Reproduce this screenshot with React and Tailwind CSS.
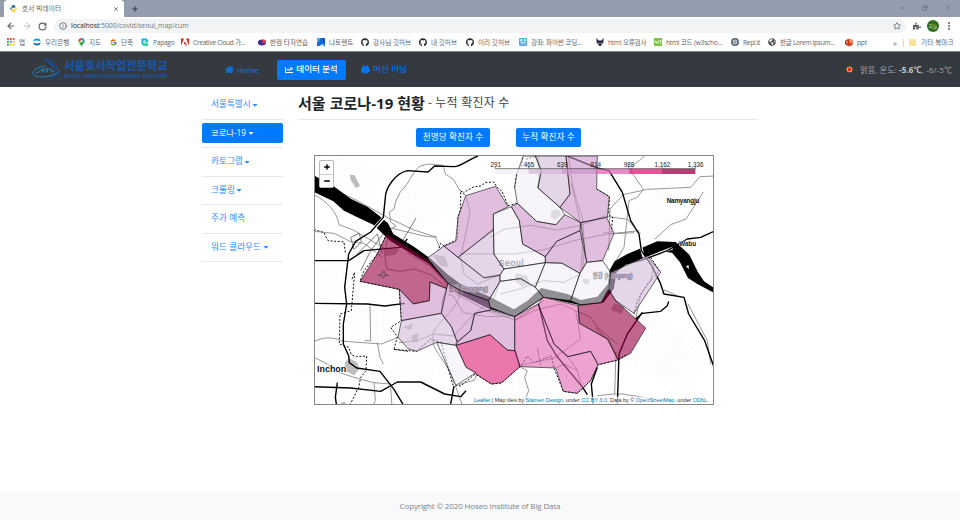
import React from "react";
import {
  FaHome, FaChartLine, FaBrain, FaGithub, FaPuzzlePiece, FaGlobeAmericas, FaCaretDown,
} from "react-icons/fa";
import { FcGoogle } from "react-icons/fc";
import { ArrowLeft, ArrowRight, RotateCw, Info, Star, X, Plus, Minus, MoreVertical, Copy } from "lucide-react";

const GridIcon = () => (
  <svg viewBox="0 0 9 9" className="size-[8px]">
    {["#ea4335", "#ea4335", "#ea4335", "#34a853", "#4285f4", "#fbbc04", "#34a853", "#fbbc04", "#fbbc04"].map((c, i) => (
      <rect key={i} x={(i % 3) * 3.2} y={Math.floor(i / 3) * 3.2} width="2.1" height="2.1" fill={c} />
    ))}
  </svg>
);
const WooriIcon = () => (
  <svg viewBox="0 0 16 16" className="size-[8px]">
    <path d="M1 7a7 6 0 0 1 14 0c-4-3-10-3-14 0z" fill="#1595d3" />
    <path d="M1 9c4 3 10 3 14 0a7 6 0 0 1-14 0z" fill="#0b67b2" />
  </svg>
);
const PinIcon = () => (
  <svg viewBox="0 0 16 20" className="h-[9px] w-[7px]">
    <path d="M8 20C7 14 1 12 1 7a7 7 0 0 1 14 0c0 5-6 7-7 13z" fill="#34a853" />
    <path d="M1 7a7 7 0 0 1 7-7v7z" fill="#ea4335" />
    <path d="M8 0a7 7 0 0 1 7 7H8z" fill="#4285f4" />
    <path d="M1 7l7 0-5 5z" fill="#fbbc04" />
    <circle cx="8" cy="7" r="2.5" fill="#fff" />
  </svg>
);
const PapagoIcon = () => (
  <svg viewBox="0 0 16 16" className="size-[8px]">
    <path d="M1 1h10l4 5-3 3 3 6H4l-3-4z" fill="#13b6d8" />
    <path d="M1 9h10l3 6H4z" fill="#12c98b" />
    <path d="M5 5h5v2H7v2h4v2H5z" fill="#fff" />
  </svg>
);
const AdobeIcon = () => (
  <svg viewBox="0 0 16 14" className="h-[8px] w-[9px]">
    <path d="M0 0h6L0 14zM10 0h6v14zM8 5l4 9H9.500l-1.200-3H5.600z" fill="#e1251b" />
  </svg>
);
const HancomIcon = () => (
  <svg viewBox="0 0 16 14" className="h-[7px] w-[8px]">
    <ellipse cx="8" cy="7" rx="8" ry="6" fill="#472a8c" />
    <circle cx="12" cy="5" r="4" fill="#e03a56" />
    <circle cx="4" cy="8" r="3.5" fill="#37308f" />
  </svg>
);
const TorrentIcon = () => (
  <svg viewBox="0 0 16 16" className="size-[8px]">
    <path d="M0 0h16v16H0z" fill="#1269d5" />
    <path d="M0 0h8L2 9H0z" fill="#2fb4ee" />
    <path d="M10 2h5v12z" fill="#0a4fc0" />
    <path d="M4 16l9-5v5z" fill="#bdeaff" />
  </svg>
);
const LectureIcon = () => (
  <svg viewBox="0 0 16 16" className="size-[8px]">
    <rect width="16" height="16" rx="2" fill="#40b8df" />
    <path d="M3 3h3v3H3zM10 3h3v3h-3zM3 9h10M4 12h3M10 12h3" stroke="#d9f5ff" strokeWidth="1.6" fill="none" />
  </svg>
);
const FoxIcon = () => (
  <svg viewBox="0 0 16 16" className="size-[8px]">
    <path d="M1 0l4 5h6l4-5v8l-5 8H6L1 8z" fill="#26263e" />
    <path d="M4 8l3 3-1 3zM12 8l-3 3 1 3z" fill="#d8d8e8" />
  </svg>
);
const W3Icon = () => (
  <svg viewBox="0 0 16 16" className="size-[8px]">
    <rect width="16" height="16" fill="#7ac143" />
    <path d="M2 5l2 6 2-5 2 5 2-6M11 5h3l-2 3c3 0 2 4-1 3" stroke="#e9ffd9" strokeWidth="1.4" fill="none" />
  </svg>
);
const ReplIcon = () => (
  <svg viewBox="0 0 16 16" className="size-[8px]">
    <circle cx="8" cy="8" r="8" fill="#56676e" />
    <circle cx="8" cy="8" r="4" fill="none" stroke="#fff" strokeWidth="1.6" />
    <circle cx="8" cy="8" r="1.4" fill="#fff" />
  </svg>
);
const PptIcon = () => (
  <svg viewBox="0 0 16 16" className="size-[9px]">
    <circle cx="8.5" cy="8" r="7.5" fill="#d35230" />
    <path d="M9 .5A7.5 7.5 0 0 1 16 8H9z" fill="#ff8f6b" />
    <rect y="4" width="8" height="8" rx="1" fill="#b7280f" />
    <path d="M3 10.500V6h1.500a1.300 1.300 0 0 1 0 2.600H3" stroke="#fff" fill="none" />
  </svg>
);
const PythonIcon = () => (
  <svg viewBox="0 0 16 16" className="size-[7px]">
    <path d="M8 0C4 0 4 1.500 4 3v1.500h4.500V5H2.500C0 5 0 11 2.500 11H4V9c0-1 1-2 2-2h4c1 0 2-1 2-2V3c0-2-1-3-4-3z" fill="#3776ab" />
    <path d="M8 16c4 0 4-1.500 4-3v-1.500H7.500V11h6C16 11 16 5 13.500 5H12v2c0 1-1 2-2 2H6c-1 0-2 1-2 2v2c0 2 1 3 4 3z" fill="#ffd43b" />
  </svg>
);

const gh = <FaGithub className="size-[8.500px] text-[#24292e]" />;
const bookmarks = [
  { w: "w-[26px]", icon: <GridIcon />, label: "앱" },
  { w: "w-[44px]", icon: <WooriIcon />, label: "우리은행" },
  { w: "w-[32px]", icon: <PinIcon />, label: "지도" },
  { w: "w-[32px]", icon: <FcGoogle className="size-[7px]" />, label: "단축" },
  { w: "w-[40px] tracking-[-0.25px]", icon: <PapagoIcon />, label: "Papago" },
  { w: "w-[77px] tracking-[-0.3px]", icon: <AdobeIcon />, label: "Creative Cloud 가..." },
  { w: "w-[59px]", icon: <HancomIcon />, label: "한컴 타자연습" },
  { w: "w-[44px]", icon: <TorrentIcon />, label: "냐토렌트" },
  { w: "w-[58px]", icon: gh, label: "강사님 깃허브" },
  { w: "w-[47px]", icon: gh, label: "내 깃허브" },
  { w: "w-[53px]", icon: gh, label: "이리 깃허브" },
  { w: "w-[77px] tracking-[-0.15px]", icon: <LectureIcon />, label: "강좌: 파이썬 코딩..." },
  { w: "w-[58px] tracking-[-0.2px]", icon: <FoxIcon />, label: "html 오류검사" },
  { w: "w-[77px] tracking-[-0.22px]", icon: <W3Icon />, label: "html 코드 (w3scho..." },
  { w: "w-[37px] tracking-[-0.3px]", icon: <ReplIcon />, label: "Repl.it" },
  { w: "w-[77px] tracking-[-0.32px]", icon: <FaGlobeAmericas className="size-[8px] text-[#4d5156]" />, label: "한글 Lorem Ipsum..." },
  { w: "w-[40px] tracking-[-0.2px]", icon: <PptIcon />, label: "ppt" },
];

function Browser() {
  return (
    <header className="text-[#5f6368]">
      <div className="flex h-[17px] items-stretch bg-[#949dae] pl-1">
        <div className="flex w-[120px] items-center rounded-t-[4px] bg-white pr-[5px] pl-[6px] text-[6.600px]">
          <PythonIcon />
          <span className="ml-[5px] flex-1 tracking-[0.15px] whitespace-nowrap">호서 빅데이터</span>
          <X className="size-[6px]" strokeWidth={3} />
        </div>
        <div className="flex flex-1 items-center pl-[7px]">
          <Plus className="size-[8px] text-[#353a42]" strokeWidth={3} />
        </div>
        <div className="flex h-[15px] items-center gap-[17px] pr-[8px] text-[#66707f]">
          <Minus className="size-[6px]" strokeWidth={3} />
          <Copy className="size-[6px] -scale-x-100" strokeWidth={3} />
          <X className="size-[7px]" strokeWidth={2.5} />
        </div>
      </div>
      <div className="flex h-[18px] items-center bg-white pr-[6px] pl-[6px]">
        <ArrowLeft className="size-[10px]" strokeWidth={2.600} />
        <ArrowRight className="ml-[6px] size-[10px] text-[#b9bcc0]" strokeWidth={2.400} />
        <RotateCw className="ml-[6px] size-[9px]" strokeWidth={3} />
        <div className="ml-[7px] flex h-[14px] w-[852px] items-center rounded-full bg-[#f1f3f4] px-[5px]">
          <Info className="size-[8px]" strokeWidth={2.400} />
          <span className="ml-1 flex-1 text-[7px] tracking-[-0.11px] text-[#777b80]"><span className="text-[#303134]">localhost</span>:5000/covid/seoul_map/cum</span>
          <Star className="size-[8px]" strokeWidth={2.500} />
        </div>
        <FaPuzzlePiece className="ml-[7px] size-[8px]" />
        <div className="ml-[6px] flex size-[12px] items-center justify-center rounded-full bg-[#2f6d1e] text-[4.500px] text-[#d9e8d5]">하늘</div>
        <MoreVertical className="ml-[5px] size-[10px]" strokeWidth={3} />
      </div>
      <div className="flex h-[16px] items-center bg-white pb-px pl-[7px] text-[6.600px]">
        {bookmarks.map((b, i) => (
          <div key={i} className={"flex shrink-0 items-center gap-[4px] whitespace-nowrap " + b.w}>
            <span className="flex w-[8px] shrink-0 justify-center">{b.icon}</span>
            {b.label}
          </div>
        ))}
        <span className="ml-[8px] w-[10px] text-[8px]">»</span>
        <span className="h-[8px] w-px bg-[#d5d8db]" />
        <span className="ml-[5px] h-[7px] w-[7px] rounded-[1px] bg-[#fce293]" />
        <span className="ml-[5px] tracking-[0.1px] whitespace-nowrap">기타 북마크</span>
      </div>
      <div className="h-px bg-[#85898d]" />
    </header>
  );
}

function Logo() {
  return (
    <div className="flex w-[136px] items-center">
      <svg viewBox="0 0 96 72" className="h-[24px] w-[32px] shrink-0" fill="none">
        <path d="M34 5C60-6 84 32 83 67c-5-24-22-47-49-62z" fill="#17509b" />
        <path d="M40 7C60 6 76 30 79 54" stroke="#343a40" strokeWidth="4" />
        <path d="M34 5C60-4 82 28 84 66" stroke="#17509b" strokeWidth="3" />
        <path d="M40 24C9 28-7 45 8 53c15 8 52 4 75-14" stroke="#2381b6" strokeWidth="3" />
        <path d="M12 46c9-2 15-12 22-14l-2 11 10-13 5 2-4 11 9-11 7 3-2 8 10-5" stroke="#2489b8" strokeWidth="3" />
        <path d="M39 57c17 1 31-5 40-15-5 13-20 25-39 27 12-4 20-7 24-13" fill="#17509b" />
      </svg>
      <div className="w-[104px] whitespace-nowrap text-[#1b55a0]">
        <div className="text-[11.500px] leading-[14px] font-black tracking-[-0.25px]">서울호서직업전문학교</div>
        <div className="font-['Liberation_Sans_Narrow','Liberation_Sans',sans-serif] text-[5.600px] leading-[7px] font-bold tracking-[-0.38px]">SEOUL HOSEO OCCUPATIONAL COLLEGE</div>
      </div>
    </div>
  );
}

function Navbar() {
  return (
    <nav className="flex h-[35px] items-center bg-[#343a40] pr-[8px] pl-[32px] text-[8.500px] whitespace-nowrap text-[#0878f2]">
      <Logo />
      <div className="ml-[57px] flex w-[52px] items-center gap-[3px] text-[8px] tracking-[-0.3px]"><FaHome className="size-[9px]" />Home</div>
      <div className="flex h-[20px] w-[69px] items-center justify-center gap-[3px] rounded-[2px] bg-[#007bff] font-medium text-white">
        <FaChartLine className="size-[8px]" />데이터 분석
      </div>
      <div className="ml-[15px] flex items-center gap-[3px] tracking-[0.1px]"><FaBrain className="size-[9px]" />머신 러닝</div>
      <div className="ml-auto flex items-center text-[8px] tracking-[0.12px] text-[#a1a5a9]">
        <svg viewBox="0 0 18 18" className="mr-[7px] size-[7px]">
          <path d="M9 0l2 3 4-1v4l3 3-3 3v4l-4-1-2 3-2-3-4 1v-4L0 9l3-3V2l4 1z" fill="#f5a529" />
          <circle cx="9" cy="9" r="4.500" fill="#f01b1b" />
        </svg>
        <span>맑음, 온도: <b className="text-[#c7cacd]">-5.6℃</b>, -6/-5℃</span>
      </div>
    </nav>
  );
}

const menu = [
  { label: "서울특별시", caret: true },
  { label: "코로나-19", caret: true, active: true },
  { label: "카토그램", caret: true },
  { label: "크롤링", caret: true },
  { label: "주가 예측" },
  { label: "워드 클라우드", caret: true },
];

function Sidebar() {
  return (
    <aside className="w-[81px] shrink-0 pt-[4px]">
      {menu.map((m) => (
        <div key={m.label} className="flex h-[28.500px] items-center border-b border-[#e9e9e9]">
          <div className={m.active
            ? "flex h-[20px] w-full items-center rounded-[2px] bg-[#007bff] pl-[9px] text-[8.300px] text-white"
            : "flex h-[20px] w-full items-center pl-[9px] text-[8.600px] tracking-[0.050px] text-[#2b8fff]"}>
            {m.label}
            {m.caret && <FaCaretDown className="ml-[0.500px] size-[8px]" />}
          </div>
        </div>
      ))}
    </aside>
  );
}

// Fill for each district, in the choropleth's class order.
const P = { a: "#f1eef6", b: "#d4b9da", c: "#c994c7", d: "#df65b0", e: "#dd1c77", f: "#980043" };
const districts = [
  ["f", "218,240 340,316 402,388 398,404 348,384 346,440 298,450 256,406 138,382 190,300"],
  ["b", "340,312 390,276 432,310 510,370 558,362 558,382 524,440 440,410 402,388"],
  ["b", "432,310 538,225 540,300 570,345 558,364 510,372"],
  ["c", "455,125 545,97 582,158 538,180 538,228 432,310 390,276 425,262 432,190"],
  ["a", "538,180 592,158 616,200 626,270 694,308 694,326 570,345 540,300"],
  ["a", "570,345 694,326 664,400 620,374 558,382 558,362"],
  ["c", "592,158 610,148 668,202 726,212 752,182 800,206 798,230 728,262 694,308 626,270 616,200"],
  ["a", "628,6 664,6 682,50 672,102 738,160 752,182 726,212 668,202 610,148 602,100 608,60"],
  ["b", "664,6 756,6 768,120 738,160 672,102 682,50"],
  ["c", "756,6 850,6 848,105 886,128 880,190 800,206 738,160 768,120"],
  ["c", "800,206 878,190 900,238 866,320 818,325"],
  ["c", "798,230 818,325 798,358 744,328 694,326 694,308 728,262"],
  ["a", "694,326 744,328 798,358 770,440 688,430 664,400"],
  ["a", "818,325 866,320 888,352 890,400 862,446 800,452 770,440 798,358"],
  ["a", "558,382 620,374 664,400 688,430 602,488 528,460 524,440"],
  ["b", "890,355 1000,305 1040,355 960,478 905,440 885,405"],
  ["f", "882,408 905,440 995,522 950,598 912,618 882,556 796,508 792,455 862,446"],
  ["d", "672,450 688,430 792,455 796,508 882,556 912,618 852,632 830,592 762,608 720,570"],
  ["d", "602,488 672,450 720,570 762,608 830,592 852,632 830,680 790,718 748,712 725,642 618,638 602,590"],
  ["e", "426,574 528,542 580,588 604,590 618,638 565,685 532,690 456,640"],
  ["c", "426,564 470,530 482,478 530,468 602,488 602,590 580,588 528,542 426,574"],
  ["c", "402,388 440,410 524,440 530,468 482,478 470,530 430,565 412,518 382,478 386,440"],
  ["c", "256,406 298,450 346,440 348,384 398,404 382,478 262,500"],
  ["b", "262,500 382,478 412,518 430,565 426,574 368,565 308,592 282,584 252,550"],
  ["a", "368,565 426,574 456,640 486,656 426,694"],
];

const streets = [
  [20, 20, 180, 90, 20], [240, 80, 170, 120, -15], [10, 470, 65, 130, 2], [110, 455, 120, 110, 0],
  [250, 590, 110, 110, 12], [920, 500, 180, 150, 20], [1010, 40, 150, 90, -10], [960, 170, 130, 60, 15],
  [610, 500, 110, 130, -16], [400, 420, 110, 100, 24], [640, 210, 130, 110, 12], [270, 400, 100, 90, 8],
  [770, 90, 80, 90, 3], [690, 340, 80, 60, 20], [20, 650, 180, 80, 6], [500, 660, 200, 70, 0], [1040, 560, 120, 140, 30], [0, 340, 80, 90, 0],
];

const highways = [
  "M492 6C460 18 440 38 420 38L362 36L342 54L280 50C245 58 215 100 214 130L208 190L170 234L125 262L104 300L98 350L92 400L98 450L88 510L88 570L104 605L106 626L128 642L198 652L240 706L270 756",
  "M0 320L104 320L150 290L258 280L280 255",
  "M0 448L160 450L212 456L272 448",
  "M0 698L110 702L200 712L250 684L320 684L392 720L440 728L456 710",
  "M70 686L64 730L68 756", "M420 696L410 750",
  "M760 6L850 42L885 50L925 115L950 200L975 240L982 290L1010 330L1038 385L1050 420L1110 430L1124 480L1172 560L1200 640",
  "M965 495L985 478L1040 472L1060 455L1064 442",
  "M980 320L1060 290L1120 255L1160 250L1200 232",
  "M985 475L940 540L915 600L910 756",
  "M674 450L700 560L728 606L806 700L820 722", "M850 640L832 690L838 756",
];

const localRoads = [
  "M45 100L130 140L220 190L300 228L370 250", "M40 124L190 216L260 266L338 324",
  "M0 122C40 142 70 175 75 212L118 228L210 282", "M0 232L60 238L108 262L150 268L205 310",
  "M318 36C290 60 282 95 260 112L246 140L240 165L226 174L230 204L246 216L228 226",
  "M318 36L345 30L388 34L394 60L418 76L438 110L452 116", "M230 222L330 246L364 250L378 282",
  "M455 125L468 175L455 240L440 310L450 360L490 390L558 362",
  "M440 300L538 300L600 300L694 286L780 260L880 240L960 236",
  "M528 250L570 226L650 214L728 228L800 214L870 186L940 196L980 240",
  "M672 6L676 60L670 104", "M764 6L775 90L788 140L805 190L812 280L806 345M772 90L796 190L806 280L800 350",
  "M1200 66L1158 68L1130 100L1000 106L928 122L888 165L884 290",
  "M950 50C960 20 980 24 990 6M950 50L988 106L970 130L945 140L930 280L900 330",
  "M1168 114L1116 195L1070 212L1022 256", "M868 236L900 238L975 230",
  "M400 420L418 426L448 476L520 488L602 486", "M440 410C430 470 390 485 360 530C340 590 400 610 420 690",
  "M255 566L310 560L360 540L420 546L470 490L540 432L560 380",
  "M0 562C40 545 60 552 90 562L202 570L252 550", "M168 454L170 560L152 560",
  "M0 610L40 630L60 650L120 670L178 686L230 690", "M190 566L198 610L208 630", "M230 700L234 756M180 686L184 740L176 756",
  "M602 500L660 470L740 450L785 470L800 555L720 612L610 636",
  "M670 582L680 635M720 570L770 620L790 650L806 706", "M785 470L830 490L850 520L910 570",
  "M845 520L878 556L912 615", "M1020 330L1010 380L980 420L965 495",
  "M620 640L640 650L632 670L644 710L626 756", "M726 642L750 630L790 650",
  "M906 594L902 720L925 720L1018 735M902 720L850 725",
  "M1044 420L1052 408L1100 430M1122 450L1180 560L1190 630",
  "M424 695L446 756M434 692L482 678L488 662", "M560 420L620 404L690 380L750 385L800 360",
  "M218 345L260 352L300 345L350 362L395 398M222 246L212 300L218 345",
];

const borders = [
  "M452 122L440 110L440 165L432 190L430 256L390 276L380 268L372 290",
  "M455 112L480 98L500 96L514 86L540 84L550 100L564 112L582 155L610 148",
  "M602 100L608 60L620 44L628 6M636 16L664 6M848 105L886 128L884 182L896 190L892 234",
  "M0 226L30 236L42 260L90 264L94 296", "M218 240L190 300L150 350L138 382L256 406L262 500L230 520L250 548L240 586L282 592",
  "M240 586L308 592L350 555L382 565L416 692L440 696L484 660L532 690L560 688L620 636L640 606L660 626L712 606L720 642L748 712L790 718L830 680L852 632L912 618L940 600",
  "M1010 310L1036 350L1000 390L970 440L960 480", "M114 375L122 355L112 470L98 474L78 480L76 570L104 580L112 602L128 608L158 606L156 650L140 670L134 700L106 756",
];

function SeoulMap() {
  return (
    <div className="relative h-[250px] w-[400px] overflow-hidden border border-[#888] bg-white">
      <svg viewBox="3 6 1194 744" preserveAspectRatio="none" className="h-full w-full" fill="none" fontFamily="Liberation Sans, Noto Sans CJK KR, sans-serif">
        <defs>
          <pattern id="blocks" width="17" height="13" patternUnits="userSpaceOnUse">
            <path d="M0 .500H17M.500 0V13" stroke="#f5f5f5" strokeWidth="1.300" />
          </pattern>
        </defs>
        {streets.map(([x, y, w, h, r], i) => (
          <rect key={i} x={x} y={y} width={w} height={h} fill="url(#blocks)" transform={`rotate(${r} ${x + w / 2} ${y + h / 2})`} />
        ))}
        <g fill="#bdbdbd">
          <path d="M108 62L122 64L138 96L126 102L110 78z" />
          <path d="M92 626L106 612L130 626L136 645L120 664L94 650z" />
          <path d="M712 170L732 166L742 182L724 198L710 188z" />
          <path d="M605 358L640 365L648 390L625 398L602 380zM806 374L826 376L824 390L808 388z" />
          <path d="M355 300L392 308L405 340L378 335zM292 545L314 536L310 565L294 560z" />
          <path d="M900 448L932 458L922 480L890 468zM266 520L298 508L290 528zM212 286L256 284L244 302L214 306zM80 748L92 742L98 756L80 756z" />
        </g>
        <g stroke="#777" strokeWidth="2.300" strokeLinejoin="round">
          {localRoads.map((d) => <path key={d} d={d} />)}
          <path d="M306 192L280 236L256 276M110 250L136 238L142 264L120 286zM130 300L190 240L205 300M140 350L170 290L210 236" stroke="#555" />
        </g>
        <path d="M0 64L58 96L110 134L160 158L192 182L222 208L238 240L300 278L350 314L402 362L440 390L530 430L600 466L640 440L682 402L760 420L800 438L850 428L882 390L886 350L902 322L940 300L1030 262L1085 264L1126 302L1152 355L1170 382L1200 402L1200 416L1150 390L1122 372L1098 325L1074 296L1040 292L985 320L935 332L908 354L899 405L868 446L800 454L690 430L604 488L520 462L430 418L345 330L230 262L178 212L130 190L90 170L58 142L0 114z" fill="#000" />
        <path d="M1116 336L1124 334L1124 346z" fill="#fff" />
        <path d="M280 296L345 334L430 422L520 470L604 498L690 440" stroke="#555" strokeWidth="2" />
        <g strokeLinejoin="round" strokeLinecap="butt">
          <path d="M210 190L174 230" stroke="#fff" strokeWidth="10" />
          <path d="M980 276L988 306L1000 324M980 320L1076 282" stroke="#fff" strokeWidth="8" />
          {highways.map((d) => <path key={d} d={d} stroke="#000" strokeWidth="4.200" />)}
        </g>
        <g stroke="#111" strokeWidth="3" strokeDasharray="6 5">
          {borders.map((d) => <path key={d} d={d} />)}
        </g>
        <text x="554" y="336" fontSize="26" fill="#333" textLength="74" stroke="#333" strokeWidth=".8">Seoul</text>
        <g fill="#222" stroke="#bbb" strokeWidth="3" paintOrder="stroke" fontSize="20" fontWeight="bold">
          <text x="404" y="410" textLength="118" lengthAdjust="spacingAndGlyphs">한강 (Hangang)</text>
          <text x="836" y="372" textLength="120" lengthAdjust="spacingAndGlyphs">한강 (Hangang)</text>
        </g>
        <g stroke="#000" strokeOpacity=".85" strokeWidth="2" strokeLinejoin="round">
          {districts.map(([k, pts], i) => <polygon key={i} points={pts} fill={P[k]} fillOpacity=".6" />)}
        </g>
        <path d="M206 352a3 7 0 0 1 5 0l0 6 12 7-12-1-1 7h-4l-1-7-13 1 14-7z" stroke="#333" strokeWidth="1.500" />
        <g fill="#111" fontWeight="bold">
          <text x="9" y="653" fontSize="27" textLength="88" stroke="#fff" strokeWidth="4" paintOrder="stroke">Inchon</text>
          <text x="1058" y="147" fontSize="19" textLength="98">Namyangju</text>
          <text x="1096" y="276" fontSize="19" textLength="50" stroke="#fff" strokeWidth="2" paintOrder="stroke">Wabu</text>
        </g>
        {Object.values(P).map((c, i) => <rect key={c} x={544 + i * 100} y="44" width="100" height="16" fill={c} fillOpacity=".75" />)}
        <path d="M544 44H1144M544 44v-6M644 44v-6M744 44v-6M844 44v-6M944 44v-6M1044 44v-6M1144 44v-6" stroke="#444" strokeWidth="2" />
        <g fill="#222" fontSize="19" textAnchor="middle">
          {["291", "465", "639", "814", "988", "1,162", "1,336"].map((t, i) => <text key={t} x={545 + i * 100} y="38">{t}</text>)}
        </g>
        <rect x="474" y="728" width="723" height="24" fill="#fff" fillOpacity=".7" />
        <text x="480" y="744" fontSize="16.500" fill="#333" textLength="704">
          <tspan fill="#0078a8">Leaflet</tspan> | Map tiles by <tspan fill="#0078a8">Stamen Design</tspan>, under <tspan fill="#0078a8">CC BY 3.0</tspan>. Data by © <tspan fill="#0078a8">OpenStreetMap</tspan>, under <tspan fill="#0078a8">ODbL</tspan>.
        </text>
      </svg>
      <div className="absolute top-[4px] left-[4px] flex h-[28px] w-[15px] flex-col divide-y divide-[#ccc] rounded-[2px] border border-[#bbb] bg-white text-black">
        <span className="flex flex-1 items-center justify-center"><Plus className="size-[8px]" strokeWidth={4} /></span>
        <span className="flex flex-1 items-center justify-center"><Minus className="size-[8px]" strokeWidth={4} /></span>
      </div>
    </div>
  );
}

export default function App() {
  return (
    <div className="flex h-[520px] w-[960px] flex-col overflow-hidden bg-white font-['Open_Sans','Noto_Sans_CJK_KR',sans-serif]">
      <Browser />
      <Navbar />
      <div className="flex flex-1 pl-[202px]">
        <Sidebar />
        <main className="ml-[15px] w-[460px]">
          <h1 className="flex h-[33px] items-center gap-[3px] border-b border-[#e9e9e9] text-[15px] font-bold tracking-[0.05px] whitespace-nowrap text-[#212529]">
            서울 코로나-19 현황 <span className="text-[12px] font-normal tracking-[0.2px] text-[#444]">- 누적 확진자 수</span>
          </h1>
          <div className="mt-[8px] flex h-[19px] pl-[118px] text-[8.600px] tracking-[0.050px] whitespace-nowrap text-white">
            <div className="flex w-[74px] items-center justify-center rounded-[2px] bg-[#007bff]">천명당 확진자 수</div>
            <div className="ml-[26px] flex w-[65px] items-center justify-center rounded-[2px] bg-[#007bff]">누적 확진자 수</div>
          </div>
          <div className="mt-[8px] ml-[16px]"><SeoulMap /></div>
        </main>
      </div>
      <footer className="flex h-[28px] items-center justify-center bg-[#f8f9fa] text-[8px] tracking-[-0.14px] text-[#7c8389]">
        Copyright © 2020 Hoseo Institute of Big Data
      </footer>
    </div>
  );
}
